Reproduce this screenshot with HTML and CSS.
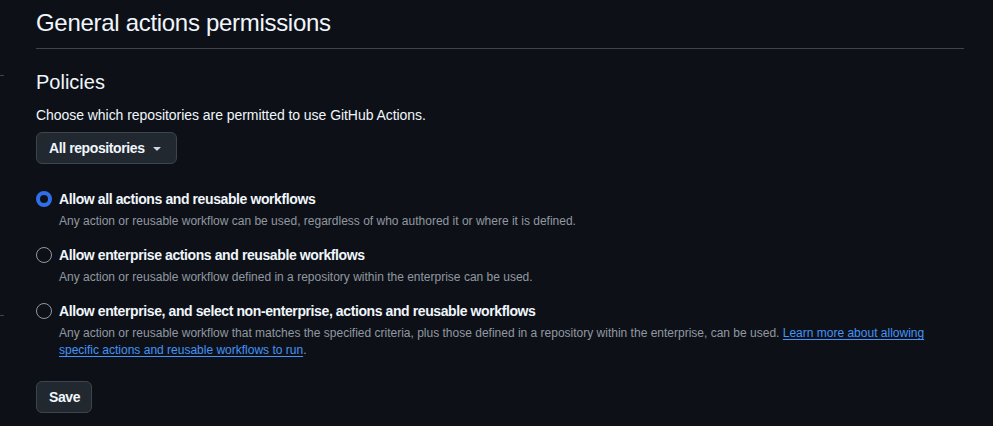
FILE: index.html
```html
<!DOCTYPE html>
<html lang="en">
    <head>
        <meta charset="UTF-8" />
        <title>Actions permissions</title>
        <link rel="stylesheet" href="styles.css">
    </head>
    <body>
        <span class="edge edge-top"></span>
        <span class="edge edge-bottom"></span>
        <main class="settings">
            <div class="subhead">
                <h2>General actions permissions</h2>
            </div>

            <section class="policies">
                <h3>Policies</h3>
                <p class="lead">Choose which repositories are permitted to use GitHub Actions.</p>
                <button class="btn select-btn">
                    All repositories
                    <svg width="16" height="16" viewBox="0 0 16 16">
                        <path d="m4.427 7.427 3.396 3.396a.25.25 0 0 0 .354 0l3.396-3.396A.25.25 0 0 0 11.396 7H4.604a.25.25 0 0 0-.177.427Z" fill="currentColor" />
                    </svg>
                </button>

                <div class="radio-list">
                    <label class="radio-item">
                        <input type="radio" name="policy" checked />
                        <div class="radio-text">
                            <span class="radio-label">Allow all actions and reusable workflows</span>
                            <span class="note">Any action or reusable workflow can be used, regardless of who authored it or where it is defined.</span>
                        </div>
                    </label>
                    <label class="radio-item">
                        <input type="radio" name="policy" />
                        <div class="radio-text">
                            <span class="radio-label">Allow enterprise actions and reusable workflows</span>
                            <span class="note">Any action or reusable workflow defined in a repository within the enterprise can be used.</span>
                        </div>
                    </label>
                    <label class="radio-item">
                        <input type="radio" name="policy" />
                        <div class="radio-text">
                            <span class="radio-label">Allow enterprise, and select non-enterprise, actions and reusable workflows</span>
                            <span class="note">Any action or reusable workflow that matches the specified criteria, plus those defined in a repository within the enterprise, can be used. <a href="#">Learn more about allowing specific actions and reusable workflows to run</a>.</span>
                        </div>
                    </label>
                </div>

                <button class="btn save-btn">Save</button>
            </section>
        </main>
    </body>
</html>
```

FILE: styles.css
```css
*,
*::before,
*::after {
    box-sizing: border-box;
}

body {
    margin: 0;
    background-color: #0d1117;
    color: #f0f6fc;
    font-family: "Liberation Sans", Arial, sans-serif;
    font-size: 14px;
    line-height: 1.5;
    position: relative;
    height: 426px;
    overflow: hidden;
}

.edge {
    position: absolute;
    left: 0;
    width: 4px;
    height: 1px;
    background-color: #3d444d;

    &.edge-top {
        top: 75px;
    }

    &.edge-bottom {
        top: 315px;
    }
}

.settings {
    padding: 0 29px 0 36px;
}

.subhead {
    padding: 6px 0 9px;
    border-bottom: 1px solid #3d444d;

    & > h2 {
        margin: 0;
        font-size: 24px;
        font-weight: 400;
        line-height: 33px;
        letter-spacing: -0.3px;
    }
}

.policies {
    padding-top: 19px;

    & > h3 {
        margin: 0;
        font-size: 20px;
        font-weight: 400;
        line-height: 28px;
    }

    & > p.lead {
        margin: 9px 0 6px;
        letter-spacing: -0.05px;
    }
}

.btn {
    display: inline-flex;
    align-items: center;
    gap: 4px;
    height: 32px;
    padding: 0 11px 0 12px;
    font-family: inherit;
    font-size: 14px;
    font-weight: 700;
    letter-spacing: -0.4px;
    color: #f0f6fc;
    background-color: #212830;
    border: 1px solid #3d444d;
    border-radius: 6px;

    & > svg {
        color: #d1d7e0;
    }
}

.radio-list {
    display: flex;
    flex-direction: column;
    gap: 15px;
    margin-top: 25px;
}

.radio-item {
    display: flex;
    align-items: flex-start;
    gap: 7px;

    & > input {
        appearance: none;
        flex-shrink: 0;
        width: 16px;
        height: 16px;
        margin: 2px 0 0 0;
        border: 1px solid #9198a1;
        border-radius: 50%;

        &:checked {
            border: 4px solid #2f6fea;
        }
    }
}

.radio-text {
    display: flex;
    flex-direction: column;
    gap: 3px;

    & .radio-label {
        font-weight: 700;
        letter-spacing: -0.4px;
    }

    & .note {
        font-size: 12px;
        line-height: 17px;
        color: #9198a1;

        & a {
            color: #4493f8;
            text-underline-offset: 2px;
        }
    }
}

.save-btn {
    margin-top: 22px;
}
```
